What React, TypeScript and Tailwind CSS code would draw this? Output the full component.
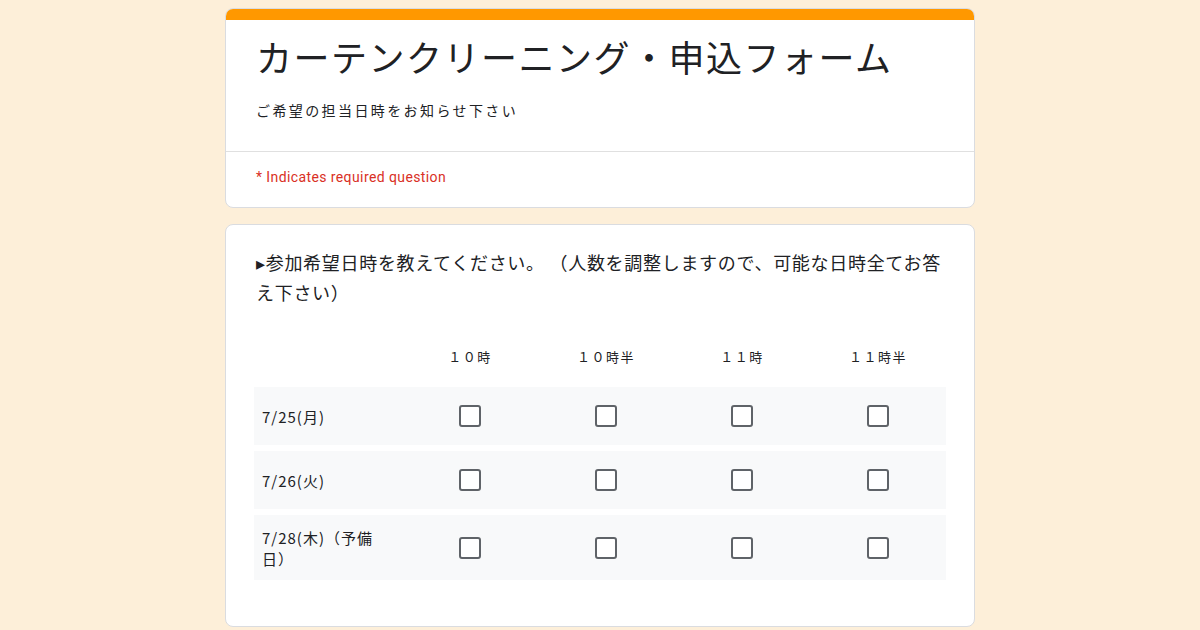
const COLS = ['１０時', '１０時半', '１１時', '１１時半']

const ROWS = [
  { label: '7/25(月)', h: 'h-[58px]' },
  { label: '7/26(火)', h: 'h-[58px]' },
  { label: '7/28(木)（予備日）', h: 'h-[65px]' },
]

function Box() {
  return <span className="block h-[22px] w-[22px] rounded-[3px] border-2 border-[#5f6368] bg-white" />
}

export default function App() {
  return (
    <div className="min-h-[630px] w-full bg-[#fdefd9] font-['Roboto','Noto_Sans_CJK_JP',sans-serif] text-[#202124]">
      <div className="mx-auto flex w-[750px] flex-col gap-[16px] pt-[8px]">
        <div className="overflow-hidden rounded-[8px] border border-[#dadce0] bg-white">
          <div className="h-[11px] bg-[#ff9800]" />
          <div className="border-b border-[#e0e0e0] px-[30px] pb-[31px] pt-[10px]">
            <h1 className="font-['Noto_Sans_CJK_JP',sans-serif] text-[36px] leading-[52px] tracking-[1.5px]">
              カーテンクリーニング・申込フォーム
            </h1>
            <p className="mt-[18px] font-['Noto_Sans_CJK_JP',sans-serif] text-[14px] leading-[20px] tracking-[2.4px]">
              ご希望の担当日時をお知らせ下さい
            </p>
          </div>
          <div className="px-[30px] pb-[20px] pt-[15px] text-[14px] leading-[20px] tracking-[0.4px] text-[#d93025]">
            * Indicates required question
          </div>
        </div>

        <div className="rounded-[8px] border border-[#dadce0] bg-white px-[28px] pb-[46px] pt-[22px]">
          <p className="pl-[2px] font-['Noto_Sans_CJK_JP',sans-serif] text-[18px] leading-[30px] tracking-[0.7px]">
            ▸参加希望日時を教えてください。 （人数を調整しますので、可能な日時全てお答え下さい）
          </p>
          <div className="mt-[41px] grid grid-cols-[148px_repeat(4,1fr)] items-center pb-[21px] font-['Noto_Sans_CJK_JP',sans-serif] text-[13px] leading-[18px] tracking-[1.5px]">
            <span />
            {COLS.map((c) => (
              <span key={c} className="text-center">
                {c}
              </span>
            ))}
          </div>
          <div className="flex flex-col gap-[6px]">
            {ROWS.map((r) => (
              <div key={r.label} className={`grid grid-cols-[148px_repeat(4,1fr)] items-center bg-[#f8f9fa] ${r.h}`}>
                <span className="w-[132px] pl-[8px] font-['Noto_Sans_CJK_JP',sans-serif] text-[15px] leading-[21px] tracking-[1px]">
                  {r.label}
                </span>
                {COLS.map((c) => (
                  <div key={c} className="flex justify-center">
                    <Box />
                  </div>
                ))}
              </div>
            ))}
          </div>
        </div>
      </div>
    </div>
  )
}
